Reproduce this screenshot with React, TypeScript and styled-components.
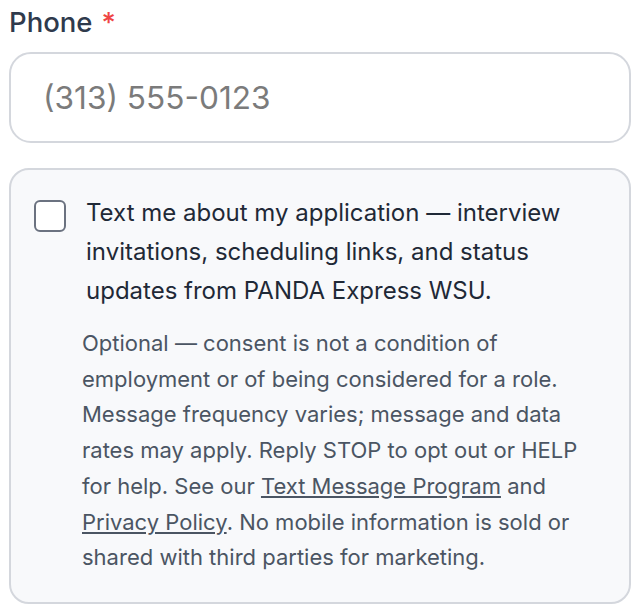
import styled, { createGlobalStyle } from "styled-components";

const GlobalStyle = createGlobalStyle`
  body {
    margin: 0;
    background: #ffffff;
    font-family: Inter, "Noto Sans", sans-serif;
  }
`;

const Field = styled.div`
  display: flex;
  flex-direction: column;
  padding: 6px 9px 0 9px;
  width: 622px;
`;

const Label = styled.label`
  font-size: 27.5px;
  font-weight: 500;
  color: #2f3a4c;
  line-height: 32px;
  margin-bottom: 14px;
`;

const Required = styled.span`
  color: #ef4444;
  margin-left: 9px;
`;

const PhoneInput = styled.input`
  box-sizing: border-box;
  height: 91px;
  border: 2px solid #d4d7dd;
  border-radius: 22px;
  padding: 0 32px;
  font-family: Inter, "Noto Sans", sans-serif;
  font-size: 31.6px;
  color: #1f2937;
  background: #fff;
  outline: none;

  &::placeholder {
    color: #7b7b7b;
  }
`;

const ConsentBox = styled.div`
  box-sizing: border-box;
  margin-top: 25px;
  border: 2px solid #d4d7dd;
  border-radius: 20px;
  background: #f8f9fb;
  padding: 28px 22px 26px 23px;
  display: flex;
  flex-direction: column;
  gap: 16px;
`;

const CheckRow = styled.label`
  display: flex;
  gap: 20px;
  align-items: flex-start;
  cursor: pointer;
`;

const Box = styled.span`
  flex: none;
  width: 32px;
  height: 32px;
  box-sizing: border-box;
  border: 2px solid #6b7280;
  border-radius: 6px;
  background: #fff;
  margin-top: 2px;
`;

const MainText = styled.span`
  font-size: 24px;
  line-height: 39px;
  color: #1f2937;
  margin-top: -5px;
`;

const Note = styled.p`
  margin: 0 0 0 48px;
  font-size: 22px;
  line-height: 35.7px;
  color: #4b5563;
`;

const Link = styled.a`
  color: #4b5563;
  text-decoration: underline;
  text-underline-offset: 2px;
`;

export default function App() {
  return (
    <>
      <GlobalStyle />
      <Field>
        <Label>
          Phone<Required>*</Required>
        </Label>
        <PhoneInput placeholder="(313) 555-0123" />
        <ConsentBox>
          <CheckRow>
            <Box />
            <MainText>
              Text me about my application — interview invitations, scheduling links, and status
              updates from PANDA Express WSU.
            </MainText>
          </CheckRow>
          <Note>
            Optional — consent is not a condition of employment or of being considered for a role.
            Message frequency varies; message and data rates may apply. Reply STOP to opt out or
            HELP for help. See our <Link href="#">Text Message Program</Link> and{" "}
            <Link href="#">Privacy Policy</Link>. No mobile information is sold or shared with third
            parties for marketing.
          </Note>
        </ConsentBox>
      </Field>
    </>
  );
}
